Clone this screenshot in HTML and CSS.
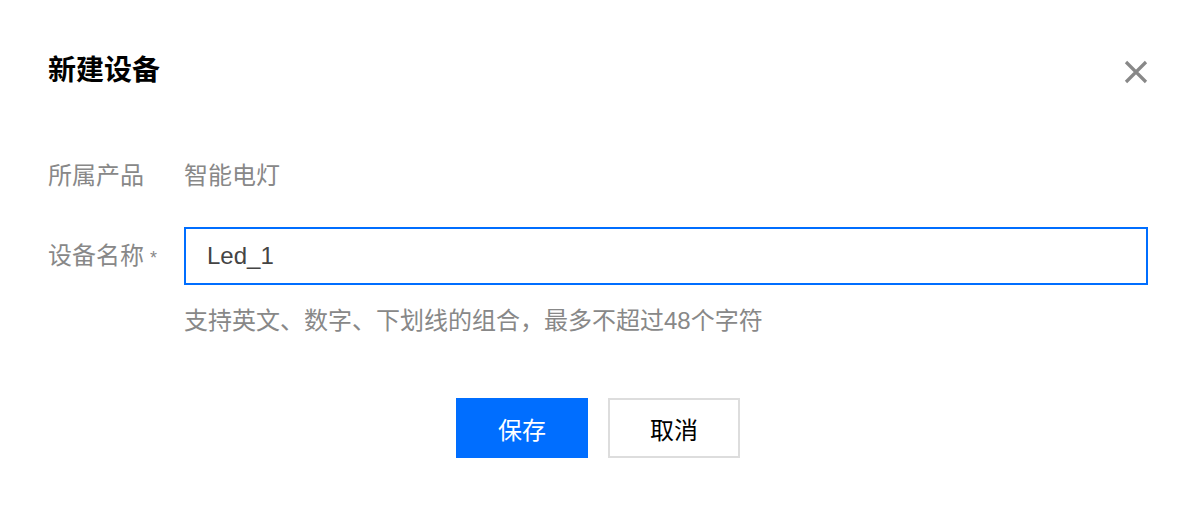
FILE: index.html
```html
<!DOCTYPE html>
<html lang="zh-CN">
<head>
<meta charset="utf-8">
<link rel="stylesheet" href="styles.css">
</head>
<body>
<div class="dialog">
  <div class="header">
    <div class="title">新建设备</div>
    <button class="close" aria-label="关闭">
      <svg width="24" height="24" viewBox="0 0 24 24"><path d="M2 2 L22 22 M22 2 L2 22" stroke="#888" stroke-width="3.2" fill="none"/></svg>
    </button>
  </div>
  <div class="form">
    <div class="row row-text">
      <div class="label">所属产品</div>
      <div class="value">智能电灯</div>
    </div>
    <div class="row row-input">
      <div class="label">设备名称<span class="req">*</span></div>
      <div class="field">
        <div class="input">Led_1</div>
        <div class="help">支持英文、数字、下划线的组合，最多不超过48个字符</div>
      </div>
    </div>
  </div>
  <div class="footer">
    <button class="btn primary">保存</button>
    <button class="btn">取消</button>
  </div>
</div>
</body>
</html>
```
FILE: styles.css
```css
* { box-sizing: border-box; }
html, body { margin: 0; padding: 0; background: #fff; }
body {
  font-family: "Liberation Sans", "Noto Sans CJK SC", sans-serif;
  width: 1198px;
  height: 506px;
  overflow: hidden;
}
.dialog { padding: 57px 50px 0 48px; }
.header {
  display: flex;
  justify-content: space-between;
  align-items: center;
  height: 28px;
}
.title {
  font-size: 28px;
  line-height: 28px;
  font-weight: bold;
  color: #000;
}
.close {
  border: 0;
  background: none;
  padding: 0;
  width: 24px;
  height: 24px;
  display: flex;
  margin-top: 2px;
}
.form { margin-top: 79px; }
.row { display: flex; }
.label {
  width: 136px;
  flex: none;
  font-size: 24px;
  line-height: 24px;
  color: #888;
}
.req { font-size: 18px; margin-left: 6px; color: #888; }
.value { font-size: 24px; line-height: 24px; color: #888; }
.row-input { margin-top: 39px; }
.row-input .label { line-height: 58px; }
.field { flex: 1; }
.input {
  height: 58px;
  border: 2px solid #006eff;
  padding: 0 21px;
  font-size: 24px;
  line-height: 54px;
  color: #444;
}
.help {
  margin-top: 24px;
  font-size: 24px;
  line-height: 24px;
  color: #888;
}
.footer {
  display: flex;
  justify-content: center;
  gap: 20px;
  margin-top: 65px;
}
.btn {
  width: 132px;
  height: 60px;
  font-family: inherit;
  font-size: 24px;
  border: 2px solid #ddd;
  background: #fff;
  color: #000;
  padding: 0;
}
.btn.primary { background: #006eff; border-color: #006eff; color: #fff; }
```
